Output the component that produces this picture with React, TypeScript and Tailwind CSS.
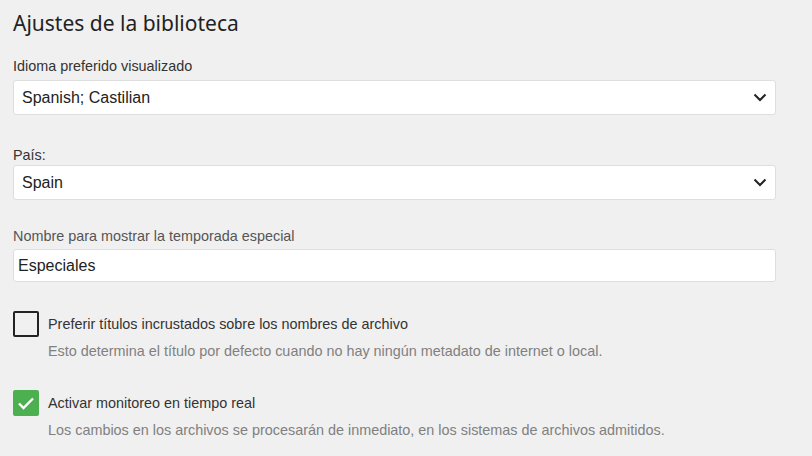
import React from "react";

const Chevron = () => (
  <svg width="14" height="9" viewBox="0 0 14 9" className="shrink-0">
    <path d="M1.5 1.5 L7 7 L12.5 1.5" fill="none" stroke="#222" strokeWidth="2" />
  </svg>
);

function Select({ value }: { value: string }) {
  return (
    <div className="flex h-[35px] w-[763px] items-center justify-between rounded-[3px] border border-[#dedede] bg-white pl-[8px] pr-[8px] text-[16px] text-[#222]">
      <span>{value}</span>
      <Chevron />
    </div>
  );
}

export default function App() {
  return (
    <div
      className="h-[456px] w-[812px] overflow-hidden bg-[#f0f0f0] pl-[13px] text-[#222]"
      style={{ fontFamily: '"Liberation Sans", Arial, sans-serif' }}
    >
      <h2
        className="pt-[8px] text-[21px] leading-[30px] text-[#222]"
        style={{ fontFamily: '"Noto Sans", sans-serif' }}
      >
        Ajustes de la biblioteca
      </h2>

      <div className="mt-[20px] text-[14.4px] leading-[16px] text-[#333]">Idioma preferido visualizado</div>
      <div className="mt-[6px]">
        <Select value="Spanish; Castilian" />
      </div>

      <div className="mt-[32px] text-[14.4px] leading-[16px] text-[#333]">País:</div>
      <div className="mt-[2px]">
        <Select value="Spain" />
      </div>

      <div className="mt-[28px] text-[14.4px] leading-[16px] text-[#555]">Nombre para mostrar la temporada especial</div>
      <div className="mt-[5px] flex h-[33px] w-[763px] items-center rounded-[3px] border border-[#dedede] bg-white pl-[4px] text-[16px] text-[#222]">
        Especiales
      </div>

      <div className="mt-[29px] flex items-start">
        <div className="h-[26px] w-[26px] shrink-0 rounded-[2px] border-2 border-[#222]" />
        <div className="ml-[9px] pt-[5px]">
          <div className="text-[14.4px] leading-[17px] text-[#333]">Preferir títulos incrustados sobre los nombres de archivo</div>
          <div className="mt-[10px] text-[14.4px] leading-[16px] text-[#808080]">
            Esto determina el título por defecto cuando no hay ningún metadato de internet o local.
          </div>
        </div>
      </div>

      <div className="mt-[31px] flex items-start">
        <div className="flex h-[26px] w-[26px] shrink-0 items-center justify-center rounded-[2px] bg-[#4caf50]">
          <svg width="18" height="14" viewBox="0 0 18 14">
            <path d="M2 7.5 L6.5 12 L16 2.5" fill="none" stroke="#fff" strokeWidth="2.4" />
          </svg>
        </div>
        <div className="ml-[9px] pt-[5px]">
          <div className="text-[14.4px] leading-[17px] text-[#333]">Activar monitoreo en tiempo real</div>
          <div className="mt-[10px] text-[14.4px] leading-[16px] text-[#808080]">
            Los cambios en los archivos se procesarán de inmediato, en los sistemas de archivos admitidos.
          </div>
        </div>
      </div>
    </div>
  );
}
